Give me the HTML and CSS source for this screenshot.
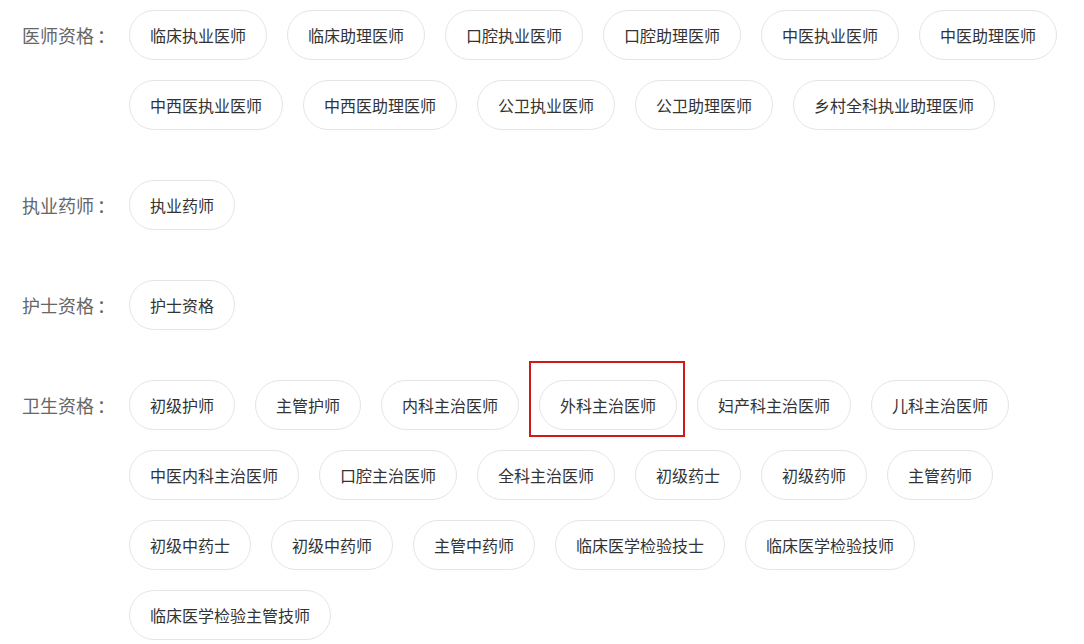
FILE: index.html
```html
<!DOCTYPE html>
<html lang="zh-CN">
<head>
    <meta charset="UTF-8">
    <meta name="viewport" content="width=device-width, initial-scale=1.0">
    <title>考试分类</title>
    <link rel="stylesheet" href="styles.css">
</head>
<body>
    <div class="exam-list">
        <!-- 医师资格 -->
        <div class="group">
            <div class="group-label">医师资格<span class="colon">：</span></div>
            <div class="tags">
                <a class="tag" href="#">临床执业医师</a>
                <a class="tag" href="#">临床助理医师</a>
                <a class="tag" href="#">口腔执业医师</a>
                <a class="tag" href="#">口腔助理医师</a>
                <a class="tag" href="#">中医执业医师</a>
                <a class="tag" href="#">中医助理医师</a>
                <a class="tag" href="#">中西医执业医师</a>
                <a class="tag" href="#">中西医助理医师</a>
                <a class="tag" href="#">公卫执业医师</a>
                <a class="tag" href="#">公卫助理医师</a>
                <a class="tag" href="#">乡村全科执业助理医师</a>
            </div>
        </div>

        <!-- 执业药师 -->
        <div class="group">
            <div class="group-label">执业药师<span class="colon">：</span></div>
            <div class="tags">
                <a class="tag" href="#">执业药师</a>
            </div>
        </div>

        <!-- 护士资格 -->
        <div class="group">
            <div class="group-label">护士资格<span class="colon">：</span></div>
            <div class="tags">
                <a class="tag" href="#">护士资格</a>
            </div>
        </div>

        <!-- 卫生资格 -->
        <div class="group">
            <div class="group-label">卫生资格<span class="colon">：</span></div>
            <div class="tags">
                <a class="tag" href="#">初级护师</a>
                <a class="tag" href="#">主管护师</a>
                <a class="tag" href="#">内科主治医师</a>
                <a class="tag tag-marked" href="#">外科主治医师</a>
                <a class="tag" href="#">妇产科主治医师</a>
                <a class="tag" href="#">儿科主治医师</a>
                <a class="tag" href="#">中医内科主治医师</a>
                <a class="tag" href="#">口腔主治医师</a>
                <a class="tag" href="#">全科主治医师</a>
                <a class="tag" href="#">初级药士</a>
                <a class="tag" href="#">初级药师</a>
                <a class="tag" href="#">主管药师</a>
                <a class="tag" href="#">初级中药士</a>
                <a class="tag" href="#">初级中药师</a>
                <a class="tag" href="#">主管中药师</a>
                <a class="tag" href="#">临床医学检验技士</a>
                <a class="tag" href="#">临床医学检验技师</a>
                <a class="tag" href="#">临床医学检验主管技师</a>
            </div>
        </div>
    </div>
</body>
</html>
```

FILE: styles.css
```css
body {
    margin: 0;
    padding: 0;
    background-color: #fff;
    font-family: "Microsoft YaHei", "Noto Sans CJK SC", sans-serif;
    color: #333;
}
.exam-list {
    padding: 10px 0 0 22px;
}
.group {
    display: flex;
    align-items: flex-start;
    margin-bottom: 30px;
}
.group-label {
    width: 107px;
    flex-shrink: 0;
    font-size: 18px;
    line-height: 50px;
    color: #666;
}
.group-label .colon {
    padding-left: 3px;
}
.tags {
    flex: 1;
    display: flex;
    flex-wrap: wrap;
}
.tag {
    position: relative;
    display: block;
    height: 48px;
    line-height: 48px;
    padding: 0 20px;
    margin: 0 20px 20px 0;
    border: 1px solid #e5e5e5;
    border-radius: 25px;
    font-size: 16px;
    color: #333;
    text-decoration: none;
    white-space: nowrap;
}
.tag:hover {
    border-color: #ccc;
}
/* red annotation box drawn over the selected tag */
.tag-marked::after {
    content: "";
    position: absolute;
    left: -11px;
    top: -20px;
    right: -9px;
    bottom: -8px;
    border: 2px solid #d01a1a;
}
```
